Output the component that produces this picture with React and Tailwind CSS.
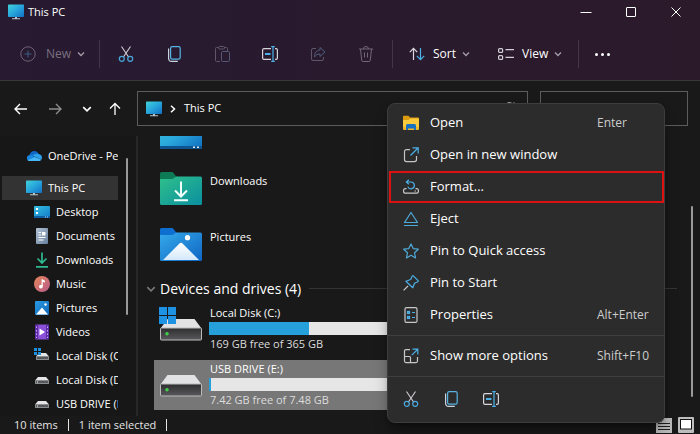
import React from 'react';

const MonitorIcon = ({ className }) => (
  <svg viewBox="0 0 16 16" className={className} aria-hidden="true">
    <defs>
      <linearGradient id="monitor" x1="0" y1="0" x2="1" y2="1">
        <stop offset="0" stopColor="#3fd3d8" />
        <stop offset="0.5" stopColor="#27a5dc" />
        <stop offset="1" stopColor="#1270c4" />
      </linearGradient>
    </defs>
    <rect x="0" y="0.5" width="16" height="12.5" rx="0.8" fill="url(#monitor)" />
    <path d="M7 13h2v1.3h3v1H4v-1h3z" fill="#b9c3cc" />
  </svg>
);

const CloudIcon = ({ className }) => (
  <svg viewBox="0 0 16 16" className={className} aria-hidden="true">
    <path d="M3.5 7.2C4 4.6 6 3 8.3 3c2 0 3.6 1.1 4.3 2.9L9 9z" fill="#1267c4" />
    <path d="M3.2 13A3.1 3.1 0 0 1 3.5 6.9c1-.2 2 0 2.8.6l6 4.8-.6.7z" fill="#1a86dd" />
    <path d="M6.5 7.6c1.5-1.7 4.3-2.4 6.1-1.5C14.8 6.4 16 8 16 9.7c0 .8-.3 1.5-.7 2z" fill="#2aa0ec" />
    <path d="M1.5 12.3 9 8.9l6.3 2.8c-.6.8-1.5 1.3-2.6 1.3H3.2c-.6 0-1.2-.3-1.700-.7z" fill="#45b8f5" />
  </svg>
);

const DesktopIcon = ({ className }) => (
  <svg viewBox="0 0 16 16" className={className} aria-hidden="true">
    <defs>
      <linearGradient id="desk" x1="0" y1="0" x2="1" y2="1">
        <stop offset="0" stopColor="#36bfe0" />
        <stop offset="1" stopColor="#127bc9" />
      </linearGradient>
    </defs>
    <rect y="2" width="16" height="12" rx="1" fill="url(#desk)" />
    <path d="M0 12h16v1a1 1 0 0 1-1 1H1a1 1 0 0 1-1-1z" fill="#0f5fa5" />
    <path d="M2 4h2v2H2zM2 8h2v2H2z" fill="#fff" />
    <path d="M11 12.5h1v1h-1zM13 12.5h1v1h-1z" fill="#bfe3ff" />
  </svg>
);

const DocumentsIcon = ({ className }) => (
  <svg viewBox="0 0 16 16" className={className} aria-hidden="true">
    <defs>
      <linearGradient id="doc" x1="0" y1="0" x2="1" y2="1">
        <stop offset="0" stopColor="#b4c4d6" />
        <stop offset="1" stopColor="#667f9d" />
      </linearGradient>
    </defs>
    <rect x="2" y="0" width="12" height="16" rx="1" fill="url(#doc)" />
    <path d="M4.5 4.5h2.5M4.5 7h2.5M4.5 9.5h7M4.5 12h5" stroke="#fff" strokeWidth="1.2" />
    <rect x="8" y="4" width="3.5" height="3.5" fill="#fff" />
  </svg>
);

const DownloadIcon = ({ className }) => (
  <svg viewBox="0 0 16 16" className={className} aria-hidden="true" fill="none" stroke="#2fb991" strokeWidth="1.7">
    <path d="M8 0.5v10.5M3.5 6.5 8 11l4.5-4.5M2 14.8h12" />
  </svg>
);

const MusicIcon = ({ className }) => (
  <svg viewBox="0 0 16 16" className={className} aria-hidden="true">
    <defs>
      <linearGradient id="music" x1="0" y1="0" x2="1" y2="1">
        <stop offset="0" stopColor="#e48759" />
        <stop offset="1" stopColor="#b95a8c" />
      </linearGradient>
    </defs>
    <circle cx="8" cy="8" r="8" fill="url(#music)" />
    <path d="M8.2 3.5v6.8" stroke="#fff" strokeWidth="1.2" />
    <path d="M8 3.2 11 4.8v1.8L8 5.4z" fill="#fff" />
    <circle cx="6.9" cy="10.6" r="1.9" fill="#fff" />
  </svg>
);

const PicturesIcon = ({ className }) => (
  <svg viewBox="0 0 16 16" className={className} aria-hidden="true">
    <defs>
      <linearGradient id="pic" x1="0" y1="0" x2="1" y2="1">
        <stop offset="0" stopColor="#2a9be4" />
        <stop offset="1" stopColor="#0f66b8" />
      </linearGradient>
    </defs>
    <rect x="1" y="1" width="14" height="14" rx="1" fill="url(#pic)" />
    <path d="M2 14.5 8 7.5l6 7z" fill="#fff" />
    <circle cx="11.5" cy="4.5" r="1.2" fill="#fff" />
  </svg>
);

const VideosIcon = ({ className }) => (
  <svg viewBox="0 0 16 16" className={className} aria-hidden="true">
    <rect x="1" y="0.5" width="14" height="15" rx="1" fill="#8a50d8" />
    <path d="M1 1h3v14H1zM12 1h3v14h-3z" fill="#5c2ba6" />
    <path d="M2 2.5h1v1.5H2zM2 6h1v1.5H2zM2 9.5h1V11H2zM2 12.7h1v1.3H2zM13 2.5h1v1.5h-1zM13 6h1v1.5h-1zM13 9.5h1V11h-1zM13 12.7h1v1.3h-1z" fill="#c9a8f5" />
    <path d="M5.5 4.5 11 8l-5.5 3.5z" fill="#fff" />
  </svg>
);

const SmallDriveIcon = ({ className }) => (
  <svg viewBox="0 0 16 16" className={className} aria-hidden="true">
    <path d="M4 5h8l3 3.500H1z" fill="#e4e4e6" />
    <rect x="1" y="8" width="14" height="4" rx="0.5" fill="#8b8d8f" />
    <rect x="2" y="9" width="12" height="2" fill="#55585a" />
    <rect x="3" y="9.500" width="1" height="1" fill="#fff" />
  </svg>
);

const SystemDriveIcon = ({ className }) => (
  <svg viewBox="0 0 16 16" className={className} aria-hidden="true">
    <path d="M5 5h7l3 3.500H2z" fill="#e4e4e6" />
    <rect x="2" y="8" width="13" height="4" rx="0.5" fill="#8b8d8f" />
    <rect x="3" y="9" width="11" height="2" fill="#55585a" />
    <path d="M0 0h3v3H0zM4 0h3v3H4zM0 4h3v3H0zM4 4h3v3H4z" fill="#1e90e0" />
  </svg>
);

const DriveIcon = ({ system }) => (
  <svg viewBox="0 0 44 36" className="h-9 w-11 shrink-0" aria-hidden="true">
    <defs>
      <linearGradient id="drive" x1="0" y1="0" x2="0" y2="1">
        <stop offset="0" stopColor="#2e2e30" />
        <stop offset="1" stopColor="#59595b" />
      </linearGradient>
    </defs>
    <path d="M8.5 12h27l7 9.5h-41z" fill="#e2e2e5" />
    <rect x="1.5" y="21" width="41" height="12" rx="0.8" fill="url(#drive)" stroke="#bcbcbe" strokeWidth="1" />
    <circle cx="8" cy="26.8" r="1.7" fill="#3fd24a" />
    {system && <path d="M0 0h8v8H0zM9 0h8v8H9zM0 9h8v8H0zM9 9h8v8H9z" fill="#1e93e4" />}
  </svg>
);

const DesktopTile = () => (
  <svg viewBox="0 0 42 32" className="h-8 w-[42px] shrink-0" aria-hidden="true">
    <defs>
      <linearGradient id="tile" x1="0" y1="0" x2="1" y2="1">
        <stop offset="0" stopColor="#3cc6e0" />
        <stop offset="0.5" stopColor="#2aa8dc" />
        <stop offset="1" stopColor="#0f6cc0" />
      </linearGradient>
    </defs>
    <rect width="42" height="32" rx="1.5" fill="url(#tile)" />
    <path d="M0 29h42v1.5a1.5 1.5 0 0 1-1.5 1.5h-39A1.5 1.5 0 0 1 0 30.5z" fill="#0e5491" />
    <path d="M33 29.5h2v1.5h-2zM37 29.5h2v1.5h-2z" fill="#d7ecff" />
  </svg>
);

const DownloadsFolder = () => (
  <svg viewBox="0 0 42 33" className="h-[33px] w-[42px] shrink-0" aria-hidden="true">
    <defs>
      <linearGradient id="dlf" x1="0" y1="0" x2="1" y2="1">
        <stop offset="0" stopColor="#2fc08a" />
        <stop offset="1" stopColor="#0a8fa0" />
      </linearGradient>
    </defs>
    <path d="M0 1.500A1.500 1.500 0 0 1 1.500 0H12c2 0 3 4.500 5 4.500V10H0z" fill="#0d7a55" />
    <path d="M0 7h12c2 0 3-2.500 5-2.500h23.500A1.500 1.500 0 0 1 42 6v25.500a1.500 1.500 0 0 1-1.500 1.500h-39A1.500 1.500 0 0 1 0 31.500z" fill="url(#dlf)" />
    <path d="M21 9.500V24M15 18.500l6 6 6-6M14 28.200h14" fill="none" stroke="#f1fffa" strokeWidth="2" />
  </svg>
);

const PicturesFolder = () => (
  <svg viewBox="0 0 42 33" className="h-[33px] w-[42px] shrink-0" aria-hidden="true">
    <defs>
      <linearGradient id="pcf" x1="0" y1="0" x2="1" y2="1">
        <stop offset="0" stopColor="#35a9ea" />
        <stop offset="1" stopColor="#0f66c4" />
      </linearGradient>
      <linearGradient id="hill" x1="0" y1="0" x2="0" y2="1">
        <stop offset="0" stopColor="#ffffff" />
        <stop offset="1" stopColor="#d4e9fa" />
      </linearGradient>
    </defs>
    <path d="M0 1.500A1.500 1.500 0 0 1 1.500 0H12c2 0 3 4.500 5 4.500V10H0z" fill="#0f6fd0" />
    <path d="M0 7h12c2 0 3-2.500 5-2.500h23.500A1.500 1.500 0 0 1 42 6v25.500a1.500 1.500 0 0 1-1.500 1.500h-39A1.500 1.500 0 0 1 0 31.500z" fill="url(#pcf)" />
    <path d="M3 32 19.500 15.500q1.500-1.300 3 0L39 32z" fill="url(#hill)" />
    <circle cx="27.500" cy="9.700" r="2.600" fill="#fff" />
  </svg>
);

/* Line icons */
const CutIcon = () => (
  <svg viewBox="0 0 16 16" className="size-4" fill="none" strokeWidth="1.2" aria-hidden="true">
    <path d="M3.5 0.5 10.6 11M12.5 0.5 5.4 11" stroke="#c9c5cc" />
    <circle cx="3.8" cy="12.8" r="2.5" stroke="#4aa8e0" />
    <circle cx="12.2" cy="12.8" r="2.5" stroke="#4aa8e0" />
  </svg>
);

const CopyIcon = () => (
  <svg viewBox="0 0 16 16" className="size-4" fill="none" strokeWidth="1.2" aria-hidden="true">
    <rect x="4.6" y="0.6" width="9.6" height="12.6" rx="1.6" stroke="#56b4e4" />
    <path d="M2.6 2.6v10a2.8 2.8 0 0 0 2.8 2.8h6.4" stroke="#c9d5e0" />
  </svg>
);

const RenameIcon = () => (
  <svg viewBox="0 0 16 16" className="size-4" fill="none" strokeWidth="1.2" aria-hidden="true">
    <path d="M9 2.6H2A1.4 1.4 0 0 0 .6 4v8A1.4 1.4 0 0 0 2 13.4h7M13 2.6h1A1.4 1.4 0 0 1 15.4 4v8a1.4 1.4 0 0 1-1.4 1.4h-1" stroke="#d8d4dc" />
    <path d="M11 .6v14.8M9.2.6h3.6M9.2 15.4h3.6" stroke="#4cb0e8" />
    <path d="M3 8h5.5" stroke="#4cb0e8" strokeWidth="2" />
  </svg>
);

const PasteIcon = () => (
  <svg viewBox="0 0 16 16" className="size-4" fill="none" stroke="#5f5668" aria-hidden="true">
    <path d="M6 15.5H2.5a1 1 0 0 1-1-1v-12a1 1 0 0 1 1-1H5M10 1.5h2.5a1 1 0 0 1 1 1V5" />
    <rect x="4.5" y="0.5" width="6" height="2.5" rx="1" />
    <rect x="7.5" y="5.5" width="8" height="10" rx="1" stroke="#545876" />
  </svg>
);

const ShareIcon = () => (
  <svg viewBox="0 0 16 16" className="size-4" fill="none" stroke="#5f5668" aria-hidden="true">
    <path d="M6 2.5H3A1.5 1.5 0 0 0 1.5 4v9A1.5 1.5 0 0 0 3 14.5h9a1.5 1.5 0 0 0 1.5-1.5v-2" />
    <path d="M10 1.5 15 6l-5 4.5V8C7 8 5.5 9 4.5 11 4.5 7 6.5 4.3 10 4z" stroke="#505e7c" />
  </svg>
);

const TrashIcon = () => (
  <svg viewBox="0 0 16 16" className="size-4" fill="none" stroke="#716878" aria-hidden="true">
    <path d="M1 3h14M5.5 3a2.5 2.5 0 0 1 5 0M2.5 3l1.2 11.2a1.4 1.4 0 0 0 1.4 1.3h5.8a1.4 1.4 0 0 0 1.4-1.3L13.5 3M6.5 6.5v5M9.5 6.5v5" />
  </svg>
);

const SortIcon = () => (
  <svg viewBox="0 0 16 14" className="h-3.5 w-4" fill="none" strokeWidth="1.2" aria-hidden="true">
    <path d="M4.5 13V1.5M.8 5.2 4.5 1.3l3.7 3.9" stroke="#ddd8e0" />
    <path d="M11.5 1v11.5M7.8 8.8l3.7 3.9 3.7-3.9" stroke="#4cb0e8" />
  </svg>
);

const ViewIcon = () => (
  <svg viewBox="0 0 16 14" className="h-3.5 w-4" fill="none" stroke="#d3ced6" strokeWidth="1.2" aria-hidden="true">
    <rect x="0.6" y="1.6" width="4" height="3.8" rx="1" />
    <rect x="0.6" y="8.6" width="4" height="3.8" rx="1" />
    <path d="M7.5 2.6H16M7.5 10.4H16" />
  </svg>
);

const ChevronDown = ({ className }) => (
  <svg viewBox="0 0 8 6" className={className} fill="none" stroke="currentColor" strokeWidth="1.3" aria-hidden="true">
    <path d="M1 1.5 4 4.5l3-3" />
  </svg>
);

const FolderIcon = () => (
  <svg viewBox="0 0 16 16" className="size-4" aria-hidden="true">
    <path d="M0 1.500A.8.800 0 0 1 .8.700H5.500L7 2.500h8.200a.8.800 0 0 1 .8.800V6H0z" fill="#dc9c10" />
    <path d="M0 5h5.500L7 3.500h8.300a.7.700 0 0 1 .7.700v9.500H0z" fill="#fbcb3e" />
    <path d="M0 12h16v2a1 1 0 0 1-1 1H1a1 1 0 0 1-1-1z" fill="#f0b62a" />
    <path d="M3 15v-4.500A1.500 1.500 0 0 1 4.500 9h7a1.500 1.500 0 0 1 1.500 1.500V15h-2v-1.500H5V15z" fill="#1870c0" />
  </svg>
);

const NewWindowIcon = () => (
  <svg viewBox="0 0 16 16" className="size-4" fill="none" strokeWidth="1.2" aria-hidden="true">
    <path d="M7 2.6H3.5a2 2 0 0 0-2 2v8a2 2 0 0 0 2 2h8a2 2 0 0 0 2-2V9" stroke="#c4c4c4" />
    <path d="M9.5.8h5.7v5.7M15 1 7.5 8.5" stroke="#4cb0e8" />
  </svg>
);

const FormatIcon = () => (
  <svg viewBox="0 0 16 16" className="size-4" fill="none" strokeWidth="1.2" aria-hidden="true">
    <path d="M3.5 9.6H2.3A1.7 1.7 0 0 0 .6 11.3v1.2a1.7 1.7 0 0 0 1.7 1.7h11.4a1.7 1.7 0 0 0 1.7-1.7v-1.2a1.7 1.7 0 0 0-1.7-1.7h-1.2M11.5 12h1.5" stroke="#c8c8c8" />
    <path d="M5.8.8 3.4 3l2.4 2.3M3.6 3H8a3.4 3.4 0 1 1-3.2 4.6" stroke="#4cb0e8" />
  </svg>
);

const EjectIcon = () => (
  <svg viewBox="0 0 16 16" className="size-4" fill="none" stroke="#4ea9d8" strokeWidth="1.2" strokeLinejoin="round" aria-hidden="true">
    <path d="M8 1.500 14.500 11.500h-13zM1 14.500h14" />
  </svg>
);

const StarIcon = () => (
  <svg viewBox="0 0 16 16" className="size-4" fill="none" stroke="#4ea9d8" strokeWidth="1.2" strokeLinejoin="round" aria-hidden="true">
    <path d="m8 .9 2.2 4.7 5.1.6-3.8 3.5 1 5.2L8 12.3l-4.5 2.6 1-5.2L.7 6.2l5.1-.6z" />
  </svg>
);

const PinIcon = () => (
  <svg viewBox="0 0 16 16" className="size-4" fill="none" strokeWidth="1.2" strokeLinejoin="round" aria-hidden="true">
    <path d="M5 11 .6 15.4" stroke="#c8c8c8" />
    <path d="m10.3.9 4.8 4.8c.3.3.2.9-.3 1l-3.3 1.500-1.700 4.600L2.900 6.200l4.800-1.700L9.300 1.100c.1-.4.7-.5 1-.2z" stroke="#4cb0e8" />
  </svg>
);

const PropertiesIcon = () => (
  <svg viewBox="0 0 16 16" className="size-4" fill="none" strokeWidth="1.2" aria-hidden="true">
    <rect x="2" y="0.6" width="12" height="14.8" rx="1.5" stroke="#c8c8c8" />
    <path d="M9 5.5h3M9 10.5h3" stroke="#4cb0e8" />
    <rect x="4.5" y="4.5" width="2" height="2" stroke="#4cb0e8" />
    <rect x="4.5" y="9.5" width="2" height="2" stroke="#4cb0e8" />
  </svg>
);

const MoreOptionsIcon = () => (
  <svg viewBox="0 0 16 16" className="size-4" fill="none" strokeWidth="1.2" aria-hidden="true">
    <path d="M7 1.6H3a1.5 1.5 0 0 0-1.5 1.5v10A1.5 1.5 0 0 0 3 14.6h10a1.5 1.5 0 0 0 1.500-1.500V9M1.500 8.500h5a1 1 0 0 1 1 1v5" stroke="#c8c8c8" />
    <path d="M9.5 1.2h5.3v5.3M14.5 1.5 8.8 7.2" stroke="#4cb0e8" />
  </svg>
);

const SIDEBAR_ITEMS = [
  { label: 'Desktop', Icon: DesktopIcon },
  { label: 'Documents', Icon: DocumentsIcon },
  { label: 'Downloads', Icon: DownloadIcon },
  { label: 'Music', Icon: MusicIcon },
  { label: 'Pictures', Icon: PicturesIcon },
  { label: 'Videos', Icon: VideosIcon },
  { label: 'Local Disk (C:)', Icon: SystemDriveIcon },
  { label: 'Local Disk (D:)', Icon: SmallDriveIcon },
  { label: 'USB DRIVE (E:)', Icon: SmallDriveIcon },
];

const DRIVES = [
  { name: 'Local Disk (C:)', free: '169 GB free of 365 GB', used: 54, system: true },
  { name: 'USB DRIVE (E:)', free: '7.42 GB free of 7.48 GB', used: 1, selected: true },
];

const MENU_ITEMS = [
  { label: 'Open', Icon: FolderIcon, shortcut: 'Enter' },
  { label: 'Open in new window', Icon: NewWindowIcon },
  { label: 'Format...', Icon: FormatIcon, highlighted: true },
  { label: 'Eject', Icon: EjectIcon },
  { label: 'Pin to Quick access', Icon: StarIcon },
  { label: 'Pin to Start', Icon: PinIcon },
  { label: 'Properties', Icon: PropertiesIcon, shortcut: 'Alt+Enter' },
];

const TOOLS = [
  { label: 'Cut', Icon: CutIcon },
  { label: 'Copy', Icon: CopyIcon },
  { label: 'Paste', Icon: PasteIcon },
  { label: 'Rename', Icon: RenameIcon },
  { label: 'Share', Icon: ShareIcon },
  { label: 'Delete', Icon: TrashIcon },
];

function TitleBar() {
  return (
    <header className="flex h-6 shrink-0 items-center pl-2">
      <MonitorIcon className="size-4" />
      <h1 className="ml-1 flex-1 text-[11px]">This PC</h1>
      <button aria-label="Minimize" className="flex h-6 w-[45px] items-center justify-center">
        <svg viewBox="0 0 12 12" className="size-3" fill="none" stroke="#fff"><path d="M.5 6.5h11" /></svg>
      </button>
      <button aria-label="Maximize" className="flex h-6 w-[45px] items-center justify-center">
        <svg viewBox="0 0 12 12" className="size-3" fill="none" stroke="#fff"><rect x="1.5" y="1.5" width="9" height="9" rx="0.5" /></svg>
      </button>
      <button aria-label="Close" className="mr-0.5 flex h-6 w-[45px] items-center justify-center">
        <svg viewBox="0 0 12 12" className="size-3" fill="none" stroke="#fff"><path d="m1.5 1.5 9 9M10.5 1.5l-9 9" /></svg>
      </button>
    </header>
  );
}

function Divider() {
  return <span className="h-7 w-px shrink-0 bg-[#43364a]" />;
}

function Toolbar() {
  return (
    <div className="flex h-[57px] shrink-0 items-center border-b border-[#3b383d] pt-1 text-xs">
      <button disabled className="ml-5 flex w-[79px] items-center text-[#7a7080]">
        <svg viewBox="0 0 16 16" className="mr-2.5 size-4" fill="none" stroke="#6d6475" aria-hidden="true">
          <circle cx="8" cy="8" r="7.2" />
          <path d="M8 4.5v7M4.5 8h7" stroke="#3f5f80" />
        </svg>
        New
        <ChevronDown className="ml-1.5 h-1.5 w-2 text-[#a59da9]" />
      </button>
      <Divider />
      <div className="flex px-0.5">
        {TOOLS.map(({ label, Icon }) => (
          <button key={label} aria-label={label} className="flex h-8 w-12 items-center justify-center">
            <Icon />
          </button>
        ))}
      </div>
      <Divider />
      <button className="ml-4 flex items-center">
        <SortIcon />
        <span className="ml-2">Sort</span>
        <ChevronDown className="ml-1.5 h-1.5 w-2 text-[#a59da9]" />
      </button>
      <button className="ml-7 flex items-center">
        <ViewIcon />
        <span className="ml-2">View</span>
        <ChevronDown className="ml-1.5 mr-4 h-1.5 w-2 text-[#a59da9]" />
      </button>
      <Divider />
      <button aria-label="See more" className="ml-4 flex gap-[3px]">
        <span className="size-[3px] rounded-full bg-white" />
        <span className="size-[3px] rounded-full bg-white" />
        <span className="size-[3px] rounded-full bg-white" />
      </button>
    </div>
  );
}

function AddressRow() {
  return (
    <div className="flex h-[55px] shrink-0 items-center px-3">
      <div className="flex w-[125px] items-center text-white">
        <button aria-label="Back" className="w-[35px]">
          <svg viewBox="0 0 16 16" className="size-4" fill="none" stroke="currentColor" strokeWidth="1.4"><path d="M15 8H3M8 3 3 8l5 5" /></svg>
        </button>
        <button aria-label="Forward" className="w-[35px] text-[#8d8d8d]">
          <svg viewBox="0 0 16 16" className="size-4" fill="none" stroke="currentColor" strokeWidth="1.4"><path d="M2 8h12M9 3l5 5-5 5" /></svg>
        </button>
        <button aria-label="Recent locations" className="w-[25px]">
          <ChevronDown className="h-2 w-2.5" />
        </button>
        <button aria-label="Up">
          <svg viewBox="0 0 16 16" className="size-4" fill="none" stroke="currentColor" strokeWidth="1.3"><path d="M8 14V2.500M3 7.500l5-5 5 5" /></svg>
        </button>
      </div>
      <nav aria-label="Address" className="flex h-[35px] flex-1 items-center border border-[#5c5c5c] pl-2">
        <MonitorIcon className="size-4" />
        <svg viewBox="0 0 6 8" className="ml-2 h-2 w-1.5" fill="none" stroke="#fff" strokeWidth="1.5"><path d="m1 .8 3.5 3.2L1 7.2" /></svg>
        <a href="#this-pc" className="ml-2 flex-1 text-[11px]">This PC</a>
        <button aria-label="Refresh" className="mr-3">
          <svg viewBox="0 0 12 14" className="h-3.5 w-3" fill="none" stroke="#ddd"><path d="M11 3.500A5.200 5.200 0 1 0 11.200 8M11 .5v3.500H8" /></svg>
        </button>
      </nav>
      <label className="ml-3 flex h-[35px] w-[148px] items-center border border-[#5c5c5c] pl-4">
        <svg viewBox="0 0 12 12" className="size-3" fill="none" stroke="#aaa"><circle cx="7" cy="5" r="4.300" /><path d="M4 8 .5 11.500" /></svg>
        <input type="search" aria-label="Search This PC" className="min-w-0 flex-1 bg-transparent px-2 text-[11px] outline-none" />
      </label>
    </div>
  );
}

function Sidebar() {
  return (
    <aside className="flex w-[138px] shrink-0 border-r-2 border-[#272727] bg-[#171717]">
      <nav className="w-[118px] overflow-hidden whitespace-nowrap pl-0.5 pt-2">
        <a href="#onedrive" className="mb-2 flex h-6 items-center pl-6">
          <CloudIcon className="mr-1.5 size-4 shrink-0" />
          OneDrive - Personal
        </a>
        <a href="#this-pc" className="flex h-6 items-center bg-[#333333] pl-6">
          <MonitorIcon className="mr-1.5 size-4 shrink-0" />
          This PC
        </a>
        {SIDEBAR_ITEMS.map(({ label, Icon }) => (
          <a key={label} href="#folder" className="flex h-6 items-center pl-8">
            <Icon className="mr-1.5 size-4 shrink-0" />
            {label}
          </a>
        ))}
      </nav>
      <span className="ml-2 mt-[22px] h-[157px] w-0.5 rounded-full bg-[#9a9a9a]" />
    </aside>
  );
}

function Drive({ name, free, used, system, selected }) {
  return (
    <li className={`ml-4 flex h-[50px] w-[250px] pl-[5px] ${selected ? 'bg-[#777777]' : ''}`}>
      <span className="mt-[3px]">
        <DriveIcon system={system} />
      </span>
      <div className="ml-1.5 w-[186px]">
        <p className="h-[18px] pl-px leading-[18px]">{name}</p>
        <div className="h-[13px] bg-[#e6e6e6]">
          <div className="h-full bg-[#26a0da]" style={{ width: `${used}%` }} />
        </div>
        <p className="h-[18px] pl-px leading-[18px] text-[#dcdcdc]">{free}</p>
      </div>
    </li>
  );
}

function FileList() {
  return (
    <main className="flex min-w-0 flex-1">
      <div className="min-w-0 flex-1">
        <div className="flex h-[13px] items-end overflow-hidden pl-[22px]">
          <DesktopTile />
        </div>
        <div className="mt-3.5 flex h-[50px] items-center pl-[22px]">
          <DownloadsFolder />
          <span className="mb-3.5 ml-2">Downloads</span>
        </div>
        <div className="mt-1.5 flex h-[50px] items-center pl-[22px]">
          <PicturesFolder />
          <span className="mb-3.5 ml-2">Pictures</span>
        </div>
        <h2 className="mt-1 flex h-[31px] items-center pl-2 text-sm">
          <ChevronDown className="mr-1 h-2 w-2.5 text-[#777777]" />
          Devices and drives (4)
          <span className="ml-2 mr-3.5 h-px flex-1 bg-[#333333]" />
        </h2>
        <ul className="flex flex-col gap-1.5">
          {DRIVES.map((drive) => (
            <Drive key={drive.name} {...drive} />
          ))}
        </ul>
      </div>
      <span className="mr-[7px] mt-[70px] h-[191px] w-0.5 rounded-full bg-[#9a9a9a]" />
    </main>
  );
}

function StatusBar() {
  return (
    <footer className="flex h-[18px] shrink-0 items-center pl-3.5 pr-1.5 text-[#e4e4e4]">
      <span>10 items</span>
      <span className="mx-2.5 h-3 w-px bg-[#e4e4e4]" />
      <span>1 item selected</span>
      <span className="mx-2.5 h-3 w-px bg-[#e4e4e4]" />
      <button aria-label="Details view" className="ml-auto">
        <svg viewBox="0 0 16 16" className="block size-4">
          <path d="M0 5h5l3-4h8v15H0z" fill="#bdbdbd" />
          <path d="M2 6.500h12M2 9.500h12M2 12.500h12" stroke="#222" />
        </svg>
      </button>
      <button aria-label="Large icons view" className="ml-1.5">
        <svg viewBox="0 0 16 16" className="block size-4">
          <rect width="16" height="16" rx="1" fill="#bdbdbd" />
          <rect x="2.500" y="2.500" width="11" height="9.500" fill="#fff" stroke="#111" />
        </svg>
      </button>
    </footer>
  );
}

function MenuItem({ label, Icon, shortcut, highlighted }) {
  return (
    <button
      role="menuitem"
      className={`flex h-8 w-full items-center px-3.5 text-left ${highlighted ? 'ring-2 ring-inset ring-[#dd1111]' : ''}`}
    >
      <Icon />
      <span className="ml-[11px] flex-1 text-[13px]">{label}</span>
      {shortcut && <span className="w-[53px] text-xs text-[#cccccc]">{shortcut}</span>}
    </button>
  );
}

function ContextMenu() {
  return (
    <div
      role="menu"
      className="absolute left-[387px] top-[103px] w-[278px] rounded-lg border border-[#3d3d3d] bg-[#2c2c2c] py-[3px] shadow-lg shadow-black/40"
    >
      <div className="pl-px">
        {MENU_ITEMS.map((item) => (
          <MenuItem key={item.label} {...item} />
        ))}
      </div>
      <div className="my-1 border-y border-[#3f3f3f] py-1 pl-px">
        <MenuItem label="Show more options" Icon={MoreOptionsIcon} shortcut="Shift+F10" />
      </div>
      <div className="flex gap-6 px-[15px] pb-3 pt-2.5">
        <button aria-label="Cut"><CutIcon /></button>
        <button aria-label="Copy"><CopyIcon /></button>
        <button aria-label="Rename"><RenameIcon /></button>
      </div>
    </div>
  );
}

export default function App() {
  return (
    <div className="relative flex h-screen flex-col overflow-hidden bg-[#191919] font-['Open_Sans','Noto_Sans',sans-serif] text-[11px] text-white">
      <div className="bg-linear-to-r from-[#271a31] to-[#2b1a2a]">
        <TitleBar />
        <Toolbar />
      </div>
      <AddressRow />
      <div className="flex min-h-0 flex-1 overflow-hidden">
        <Sidebar />
        <FileList />
      </div>
      <StatusBar />
      <ContextMenu />
    </div>
  );
}
